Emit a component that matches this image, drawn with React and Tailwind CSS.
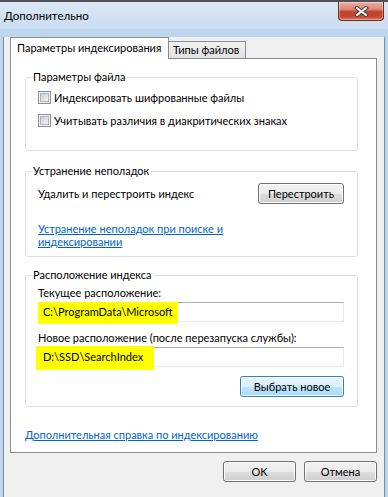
import React from 'react';

const Checkbox = () => (
  <span className="flex h-[13px] w-[13px] shrink-0 items-center justify-center border border-[#8e8f8f] bg-[#f4f4f4]">
    <span className="h-[9px] w-[9px] border border-[#b1b5bb] bg-linear-to-br from-[#cbced3] to-[#f4f4f4]" />
  </span>
);

const Button = ({ children, className = '', focused = false }) => (
  <button
    className={`flex h-[21px] items-center justify-center rounded-[3px] border text-[11px] leading-none text-black ${
      focused
        ? 'border-[#3c7fb1] bg-[linear-gradient(to_bottom,#eaf6fd_0%,#d9f0fc_50%,#bee6fd_50%,#a7d9f5_100%)] shadow-[inset_0_0_0_1px_#f4fbff]'
        : 'border-[#707070] bg-[linear-gradient(to_bottom,#f2f2f2_0%,#ebebeb_50%,#dddddd_50%,#cfcfcf_100%)] shadow-[inset_0_0_0_1px_#fcfcfc]'
    } ${className}`}
  >
    {children}
  </button>
);

const CloseButton = () => (
  <div className="flex h-[19px] w-[46px] items-center justify-center rounded-b-[4px] border border-t-0 border-[#6b2d25] bg-[linear-gradient(to_bottom,#eab0a4_0%,#dc8673_40%,#c2412b_55%,#c4462e_80%,#d9775e_100%)] shadow-[inset_0_0_0_1px_rgba(255,255,255,0.35)]">
    <svg width="15" height="11" viewBox="0 0 15 11">
      <path d="M3 2 L12 9 M12 2 L3 9" stroke="#3b3b3b" strokeWidth="4" strokeLinecap="square" />
      <path d="M3 2 L12 9 M12 2 L3 9" stroke="#f4f4f4" strokeWidth="2" strokeLinecap="square" />
    </svg>
  </div>
);

const Group = ({ title, className = '', children }) => (
  <fieldset className={`w-[333px] rounded-[3px] border border-[#d5dfe5] ${className}`}>
    <legend className="ml-[5px] px-[2px] leading-[14px]">{title}</legend>
    {children}
  </fieldset>
);

const TextBox = ({ value, hl }) => (
  <div className="relative h-[20px] w-[306px] border border-[#e3e9ef] border-t-[#abadb3] bg-white">
    <span className={`absolute bg-[#ffff00] ${hl}`} />
    <span className="relative block pl-[4px] leading-[18px]">{value}</span>
  </div>
);

export default function App() {
  return (
    <div className="h-[497px] w-[388px] overflow-hidden bg-[#bfd6ef] font-['Lato','Liberation_Sans',sans-serif] text-[11px] leading-[16px] text-black">
      <div className="h-[2px] bg-[#4d5258]" />

      {/* title bar */}
      <div className="flex h-[27px] items-start justify-between bg-linear-to-b from-[#dce8f5] to-[#cadcf0] pl-[4px] pr-[4px]">
        <span className="mt-[6px] text-[11.5px] leading-[16px]">Дополнительно</span>
        <CloseButton />
      </div>

      {/* client area */}
      <div className="mx-[3px] h-[462px] w-[382px] border-x border-b border-[#7f8b99] bg-[#f0f0f0]">
        {/* tabs */}
        <div className="ml-[6px] mt-[8px] flex h-[21px] items-end">
          <div className="relative z-10 -mb-px flex h-[22px] w-[159px] items-center border-x border-t border-[#898c95] bg-white pb-[1px] pl-[6px]">
            Параметры индексирования
          </div>
          <div className="flex h-[17px] w-[77px] items-center border-r border-t border-[#898c95] bg-linear-to-b from-[#f2f2f2] to-[#e1e1e1] pl-[4px]">
            Типы файлов
          </div>
        </div>

        {/* tab panel */}
        <div className="ml-[6px] h-[395px] w-[367px] border border-[#898c95] bg-white pl-[14px] pt-[11px]">
          <Group title="Параметры файла">
            <div className="pb-[22px] pl-[12px]">
              <div className="mt-[6px] flex h-[15px] items-center gap-[3px]">
                <Checkbox />
                <span>Индексировать шифрованные файлы</span>
              </div>
              <div className="mt-[8px] flex h-[15px] items-center gap-[3px]">
                <Checkbox />
                <span>Учитывать различия в диакритических знаках</span>
              </div>
            </div>
          </Group>

          <Group title="Устранение неполадок" className="mt-[13px]">
            <div className="pb-[8px] pl-[12px] pr-[13px]">
              <div className="mt-[5px] flex items-center justify-between">
                <span className="mt-[1px]">Удалить и перестроить индекс</span>
                <Button className="w-[86px]">Перестроить</Button>
              </div>
              <a className="mt-[18px] block leading-[13px] text-[#0066cc] underline">
                Устранение неполадок при поиске и
                <br />
                индексировании
              </a>
            </div>
          </Group>

          <Group title="Расположение индекса" className="mt-[11px]">
            <div className="pb-[9px] pl-[12px] pr-[13px]">
              <div className="mt-[3px]">Текущее расположение:</div>
              <div className="mt-[1px]">
                <TextBox value="C:\ProgramData\Microsoft" hl="-left-[1px] -top-[1px] h-[22px] w-[140px]" />
              </div>
              <div className="mt-[8px]">Новое расположение (после перезапуска службы):</div>
              <div className="mt-[1px]">
                <TextBox value="D:\SSD\SearchIndex" hl="-left-[3px] -top-[2px] h-[24px] w-[118px]" />
              </div>
              <div className="mt-[9px] flex justify-end">
                <Button focused className="w-[104px]">Выбрать новое</Button>
              </div>
            </div>
          </Group>

          <a className="mt-[21px] block leading-[13px] text-[#0066cc] underline">
            Дополнительная справка по индексированию
          </a>
        </div>

        {/* dialog buttons */}
        <div className="ml-[6px] mt-[8px] flex w-[367px] justify-end gap-[8px]">
          <Button className="w-[73px]">OK</Button>
          <Button className="w-[73px]">Отмена</Button>
        </div>
      </div>
    </div>
  );
}
